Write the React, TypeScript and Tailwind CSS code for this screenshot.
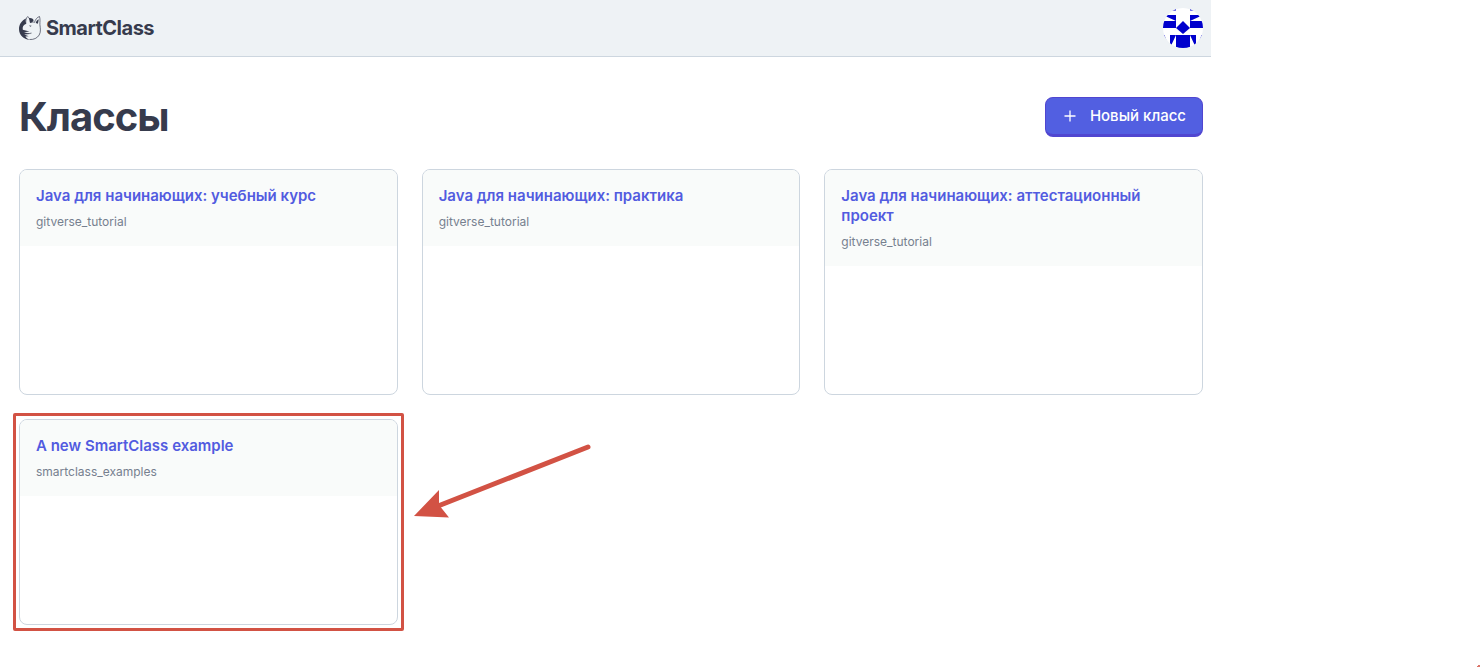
import React from 'react';

interface Course {
  id: number;
  title: string;
  owner: string;
  highlighted?: boolean;
}

const courses: Course[] = [
  { id: 1, title: 'Java для начинающих: учебный курс', owner: 'gitverse_tutorial' },
  { id: 2, title: 'Java для начинающих: практика', owner: 'gitverse_tutorial' },
  { id: 3, title: 'Java для начинающих: аттестационный проект', owner: 'gitverse_tutorial' },
  { id: 4, title: 'A new SmartClass example', owner: 'smartclass_examples', highlighted: true },
];

const Logo: React.FC = () => (
  <svg className="h-6 w-[22px]" viewBox="0 0 22 24" fill="none" aria-hidden="true">
    {/* Dark back of the head */}
    <path
      d="M7 2.5C2.8 4.4 0 8.300 0 13c0 6 4.700 10.500 10.500 10.800C8.500 22.600 7 21.500 6.300 20.400l3.400-.2-4.500-1.800 5.800-.3-6.500-1.900 6-.7-6.700-1.700C3.200 11 4.500 8.800 7.200 7.800L6.500 5Z"
      fill="#363b4d"
    />
    <path d="M9.800 2.200c2.300-.5 4 .4 4.900 2.100l-1.500 2-2.200.7C11 5 10.600 3.500 9.800 2.200Z" fill="#363b4d" />
    <path d="M19.800 3.200c-1.700.8-2.800 2.200-3.100 3.900l2.200.6c.3-1.600.6-3 .9-4.500Z" fill="#363b4d" />
    {/* Ears and muzzle */}
    <path
      d="M6.800 7.700C6.600 5 7 2 8.600.6c1.700.8 2.400 2.900 2.700 5.800 1.600-.5 3-.6 4.200 0C16.400 3.400 18.200 1.200 20.500.5c.9 3 .3 5.500.4 8.200.4 3.400 1.200 7-.7 10.300-2 3.200-5.500 4.800-9.700 4.500"
      stroke="#363b4d"
      strokeWidth=".7"
      strokeLinejoin="round"
    />
    <path d="M10 9.600l2.700.2-1.300.9Z" fill="#363b4d" />
    <path d="M4.500 16.500c3 1.300 5.800 1.200 8 .6" stroke="#363b4d" strokeWidth=".7" />
  </svg>
);

const Avatar: React.FC = () => (
  <svg className="h-10 w-10" viewBox="0 0 40 40" aria-hidden="true">
    <defs>
      <clipPath id="avatar-clip">
        <circle cx="20" cy="20" r="20" />
      </clipPath>
    </defs>
    <g clipPath="url(#avatar-clip)">
      <rect width="40" height="40" fill="#fff" />
      <g fill="#0000cd">
        <path d="M0 0h13v2.500L0 3ZM40 0H27v2.500l13 .5Z" />
        <path d="M0 7h13v6ZM40 7H27v6Z" />
        <path d="M0 13h13v7H0ZM27 13h13v7H27Z" />
        <path d="M20 13l7 7-7 6-7-6Z" />
        <path d="M13 27h14v13H13Z" />
        <path d="M7 27h6L7 40ZM33 27h-6l6 13Z" />
        <path d="M0 27h1.500l2.500 7ZM40 27h-1.500l-2.500 7Z" />
      </g>
    </g>
  </svg>
);

const Header: React.FC = () => (
  <header className="flex h-[57px] items-center justify-between border-b border-[#cdd6df] bg-[#eef2f5] pr-2 pl-[19px]">
    <a href="#" className="flex items-center gap-[5px] text-xl font-bold tracking-tight">
      <Logo />
      SmartClass
    </a>
    <button type="button" aria-label="Профиль" className="rounded-full">
      <Avatar />
    </button>
  </header>
);

const CourseCard: React.FC<{ course: Course }> = ({ course }) => (
  <article className="relative flex flex-col rounded-lg border border-[#cdd6df]">
    <div className="rounded-t-[7px] bg-[#f9fbfa] p-4">
      <h2 className="text-[15px] leading-5 font-semibold text-[#525be0]">
        <a href="#">{course.title}</a>
      </h2>
      <p className="mt-2 text-xs leading-4 text-[#76808f]">{course.owner}</p>
    </div>
    <div className="min-h-32 grow" />
    {course.highlighted && (
      <>
        <div className="pointer-events-none absolute -inset-[7px] rounded-xs border-3 border-[#d25244]" />
        <svg
          className="pointer-events-none absolute top-5 left-full ml-4 h-20 w-[180px]"
          viewBox="0 0 180 80"
          aria-hidden="true"
        >
          <path d="M175 7L25 66" stroke="#d25244" strokeWidth="5" strokeLinecap="round" />
          <path d="M1 76L26 50v15l10 12.500Z" fill="#d25244" />
        </svg>
      </>
    )}
  </article>
);

const App: React.FC = () => {
  return (
    <div className="relative min-h-screen bg-white font-['Inter',sans-serif] text-[#363b4d]">
      <div className="w-full max-w-[1211px]">
        <Header />

        <main className="pt-10 pr-2 pb-8 pl-[19px]">
          <div className="flex items-center justify-between">
            <h1 className="text-[40px] leading-10 font-bold tracking-tight">Классы</h1>
            <button
              type="button"
              className="flex h-10 items-center rounded-lg border border-b-3 border-[#5046d0] bg-[#525fe1] px-4 text-[15px] font-medium text-white"
            >
              <svg className="mr-3 h-4 w-4" viewBox="0 0 16 16" fill="none" aria-hidden="true">
                <path d="M8 2.500v11M2.500 8h11" stroke="currentColor" strokeWidth="1.300" />
              </svg>
              Новый класс
            </button>
          </div>

          <div className="mt-8 grid grid-cols-3 gap-6">
            {courses.map((course) => (
              <CourseCard key={course.id} course={course} />
            ))}
          </div>
        </main>
      </div>

      {/* Corner mark */}
      <svg className="absolute right-0 bottom-0 h-0.5 w-[3px]" viewBox="0 0 3 2" aria-hidden="true">
        <path d="M0 1h1V0h2v2H0Z" fill="#d25244" fillOpacity=".8" />
      </svg>
    </div>
  );
};

export default App;
